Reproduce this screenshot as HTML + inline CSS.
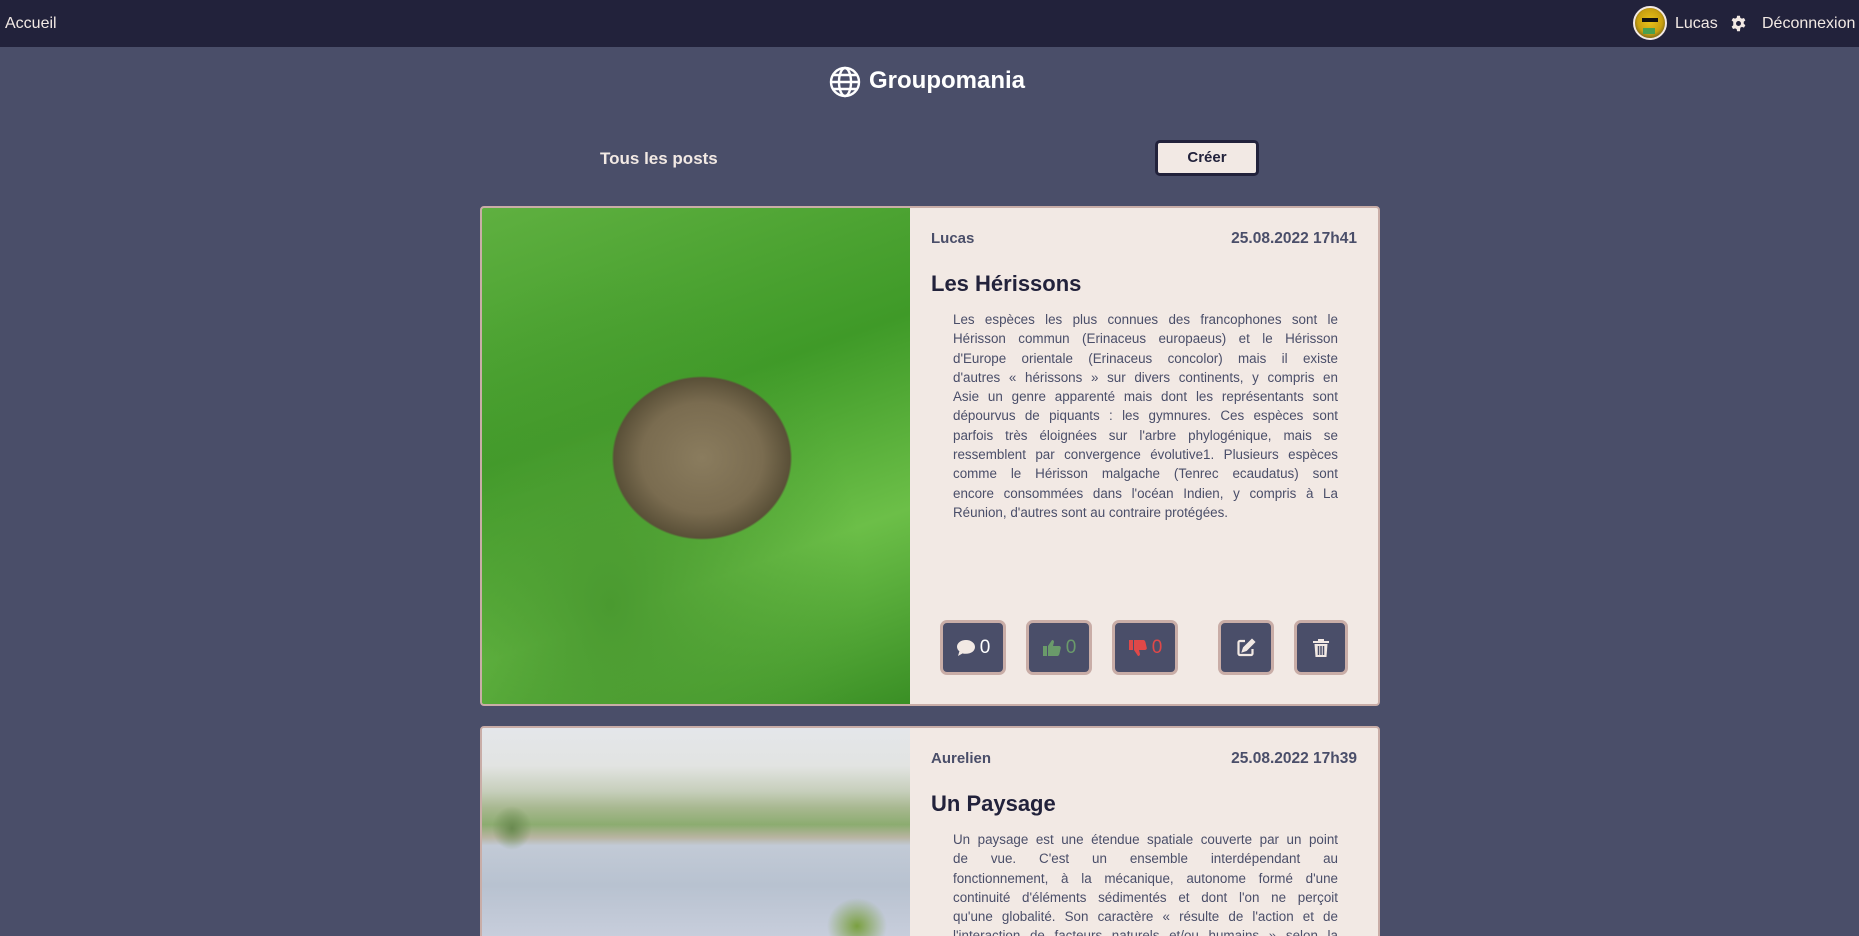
<!DOCTYPE html>
<html style="height:936px;overflow:hidden"><head><meta charset="utf-8"><style>
*{margin:0;padding:0;box-sizing:border-box}
body{width:1859px;height:936px;overflow:hidden;background:#4a4e69;font-family:"Liberation Sans",sans-serif;position:relative}
.nav{position:absolute;left:0;top:0;width:1859px;height:47px;background:#22223b;color:#f2e9e4;font-size:16px}
.abs{position:absolute}
.card{position:absolute;left:480px;width:900px;background:#f2e9e4;border:2px solid #c9ada7;border-radius:4px;overflow:hidden}
.img{position:absolute;left:0;top:0;width:428px;height:100%}
.author{position:absolute;left:449px;top:22px;font-size:15px;font-weight:bold;color:#4a4e69}
.date{position:absolute;right:21px;top:22px;font-size:15.5px;font-weight:bold;color:#4a4e69}
.title{position:absolute;left:449px;top:63px;font-size:22px;font-weight:bold;color:#22223b}
.txt{position:absolute;left:471px;top:102px;width:385px;font-size:13.4px;line-height:19.3px;color:#4a4e69}
.txt div{white-space:nowrap;display:flex;justify-content:space-between}
.txt div.l{justify-content:flex-start;gap:4px}
.btn{position:absolute;top:412px;height:55px;background:#4a4e69;border:3px solid #c9ada7;border-radius:7px;display:flex;align-items:center;justify-content:center;gap:4px;font-size:19px}
</style></head><body>
<div class="nav">
<div class="abs" style="left:5px;top:15px">Accueil</div>
<div class="abs" style="left:1633px;top:6px;width:34px;height:34px;border-radius:50%;border:2px solid #f2e9e4;background:radial-gradient(circle at 50% 45%,#e8c21a 0,#c9a010 55%,#2a2a20 100%);overflow:hidden"><div style="position:absolute;left:7px;top:10px;width:16px;height:4px;background:#111"></div><div style="position:absolute;left:8px;top:20px;width:12px;height:6px;background:#4aa050"></div></div>
<div class="abs" style="left:1675px;top:15px">Lucas</div>
<svg class="abs" style="left:1730px;top:15px" width="17" height="17" viewBox="0 0 24 24"><path fill="#f2e9e4" d="M12 8.5a3.5 3.5 0 1 0 0 7 3.5 3.5 0 0 0 0-7zM10 1h4l.6 3 2.2 1.2 2.9-1 2 3.4-2.3 2v2.8l2.3 2-2 3.4-2.9-1-2.2 1.2L14 23h-4l-.6-3-2.2-1.2-2.9 1-2-3.4 2.3-2V9.6L2.3 7.6l2-3.4 2.9 1L9.4 4z" fill-rule="evenodd"/></svg>
<div class="abs" style="left:1762px;top:15px">Déconnexion</div>
</div>
<svg class="abs" style="left:829px;top:66px" width="32" height="32" viewBox="0 0 32 32" fill="none" stroke="#fff" stroke-width="2.4"><circle cx="16" cy="16" r="14"/><ellipse cx="16" cy="16" rx="6" ry="14"/><path d="M2 16h28M4 9h24M4 23h24"/></svg>
<div class="abs" style="left:869px;top:67px;font-size:24px;font-weight:bold;color:#fff">Groupomania</div>
<div class="abs" style="left:600px;top:149px;font-size:17px;font-weight:bold;color:#f2e9e4">Tous les posts</div>
<div class="abs" style="left:1155px;top:140px;width:104px;height:36px;background:#f2e9e4;border:3px solid #22223b;border-radius:5px;font-size:15px;font-weight:bold;color:#22223b;text-align:center;line-height:30px">Créer</div>

<div class="card" style="top:206px;height:500px">
<div class="img" style="background:radial-gradient(ellipse 110px 100px at 220px 250px,#8a7c5e 0,#7a6c50 55%,#5a5038 80%,transparent 82%),radial-gradient(ellipse at 30% 80%,#4a9a30,transparent 60%),linear-gradient(160deg,#5fb040,#3f9a28 40%,#6cbf48 70%,#3a8f25)"></div>
<div class="author">Lucas</div><div class="date">25.08.2022 17h41</div>
<div class="title">Les Hérissons</div>
<div class="txt">
<div><span>Les</span><span>espèces</span><span>les</span><span>plus</span><span>connues</span><span>des</span><span>francophones</span><span>sont</span><span>le</span></div>
<div><span>Hérisson</span><span>commun</span><span>(Erinaceus</span><span>europaeus)</span><span>et</span><span>le</span><span>Hérisson</span></div>
<div><span>d'Europe</span><span>orientale</span><span>(Erinaceus</span><span>concolor)</span><span>mais</span><span>il</span><span>existe</span></div>
<div><span>d'autres</span><span>«</span><span>hérissons</span><span>»</span><span>sur</span><span>divers</span><span>continents,</span><span>y</span><span>compris</span><span>en</span></div>
<div><span>Asie</span><span>un</span><span>genre</span><span>apparenté</span><span>mais</span><span>dont</span><span>les</span><span>représentants</span><span>sont</span></div>
<div><span>dépourvus</span><span>de</span><span>piquants</span><span>:</span><span>les</span><span>gymnures.</span><span>Ces</span><span>espèces</span><span>sont</span></div>
<div><span>parfois</span><span>très</span><span>éloignées</span><span>sur</span><span>l'arbre</span><span>phylogénique,</span><span>mais</span><span>se</span></div>
<div><span>ressemblent</span><span>par</span><span>convergence</span><span>évolutive1.</span><span>Plusieurs</span><span>espèces</span></div>
<div><span>comme</span><span>le</span><span>Hérisson</span><span>malgache</span><span>(Tenrec</span><span>ecaudatus)</span><span>sont</span></div>
<div><span>encore</span><span>consommées</span><span>dans</span><span>l'océan</span><span>Indien,</span><span>y</span><span>compris</span><span>à</span><span>La</span></div>
<div class="l">Réunion, d'autres sont au contraire protégées.</div>
</div>
<div class="btn" style="left:458px;width:66px;color:#fff"><svg width="20" height="18" viewBox="0 0 20 18"><path fill="#f2e9e4" d="M10 1C4.8 1 1 4 1 7.7c0 1.8.9 3.4 2.4 4.6L2 17l4.6-2.6c1 .3 2.2.4 3.4.4 5.2 0 9-3 9-6.8S15.2 1 10 1z"/></svg>0</div>
<div class="btn" style="left:544px;width:66px;color:#6a9a6a"><svg width="20" height="18" viewBox="0 0 20 18"><path fill="#6a9a6a" d="M1 7h4v10H1zM6 7l4-6c1.5 0 2 1 2 2l-1 4h6c1.2 0 2 1 1.8 2l-1.4 6c-.3 1-1 2-2 2H6z"/></svg>0</div>
<div class="btn" style="left:630px;width:66px;color:#e04848"><svg width="20" height="18" viewBox="0 0 20 18"><path fill="#e04848" d="M1 1h4v10H1zM6 11l4 6c1.5 0 2-1 2-2l-1-4h6c1.2 0 2-1 1.8-2L17.4 3c-.3-1-1-2-2-2H6z"/></svg>0</div>
<div class="btn" style="left:736px;width:56px"><svg width="20" height="20" viewBox="0 0 20 20" fill="none" stroke="#f2e9e4" stroke-width="2.2"><path d="M9 3H4a1.5 1.5 0 0 0-1.5 1.5v11A1.5 1.5 0 0 0 4 17h11a1.5 1.5 0 0 0 1.5-1.5V11"/><path d="M16 2l2 2-8 8-3 1 1-3z" fill="#f2e9e4"/></svg></div>
<div class="btn" style="left:812px;width:54px"><svg width="18" height="20" viewBox="0 0 18 20"><path fill="#f2e9e4" d="M1 3h16v2H1zM6 1h6v2H6zM2.5 6h13l-1 13h-11z"/><path stroke="#4a4e69" stroke-width="1.5" d="M6.5 8v9M9 8v9M11.5 8v9"/></svg></div>
</div>

<div class="card" style="top:726px;height:214px">
<div class="img" style="background:radial-gradient(ellipse 20px 22px at 30px 100px,#6a8a50,transparent),radial-gradient(ellipse 30px 28px at 375px 198px,#7aa040,transparent),linear-gradient(180deg,#e4e6ea 0,#e2e4e2 18%,#c7cfbc 30%,#a8b890 38%,#8cac70 46%,#b8b4a0 52%,#c2cad6 56%,#b8c2d0 75%,#c8cedc 100%)"></div>
<div class="author">Aurelien</div><div class="date">25.08.2022 17h39</div>
<div class="title">Un Paysage</div>
<div class="txt">
<div><span>Un</span><span>paysage</span><span>est</span><span>une</span><span>étendue</span><span>spatiale</span><span>couverte</span><span>par</span><span>un</span><span>point</span></div>
<div><span>de</span><span>vue.</span><span>C'est</span><span>un</span><span>ensemble</span><span>interdépendant</span><span>au</span></div>
<div><span>fonctionnement,</span><span>à</span><span>la</span><span>mécanique,</span><span>autonome</span><span>formé</span><span>d'une</span></div>
<div><span>continuité</span><span>d'éléments</span><span>sédimentés</span><span>et</span><span>dont</span><span>l'on</span><span>ne</span><span>perçoit</span></div>
<div><span>qu'une</span><span>globalité.</span><span>Son</span><span>caractère</span><span>«</span><span>résulte</span><span>de</span><span>l'action</span><span>et</span><span>de</span></div>
<div><span>l'interaction</span><span>de</span><span>facteurs</span><span>naturels</span><span>et/ou</span><span>humains</span><span>»</span><span>selon</span><span>la</span></div>
</div>
</div>
</body></html>
